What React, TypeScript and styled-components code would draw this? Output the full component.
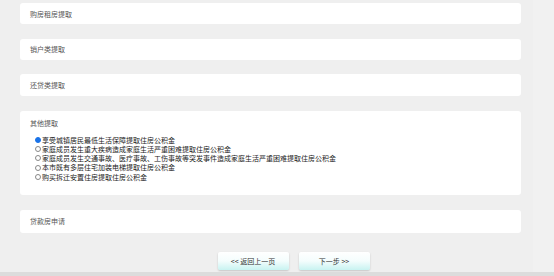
import styled, { createGlobalStyle } from "styled-components";

const GlobalStyle = createGlobalStyle`
  html, body {
    margin: 0;
    padding: 0;
    background: #efefef;
  }
  body {
    font-family: "Noto Sans CJK SC", "Liberation Sans", sans-serif;
    color: #333;
  }
`;

const Page = styled.div`
  width: 554px;
  height: 276px;
  display: flex;
  flex-direction: column;
  overflow: hidden;
  background: #efefef;
`;
const Main = styled.div`
  flex: 1;
  display: flex;
`;
const Content = styled.div`
  width: 501px;
  padding: 3px 0 0 20px;
  display: flex;
  flex-direction: column;
  gap: 14.5px;
`;
const SideStrip = styled.div`
  flex: 1;
  margin-left: 12px;
  background: #f1f1f1;
`;
const Card = styled.div<{ $tall?: boolean; $h?: number }>`
  background: #fff;
  border-radius: 3px;
  padding: ${(p) => (p.$tall ? "8px 10px 14px" : "0 10px")};
  height: ${(p) => (p.$tall ? "auto" : `${p.$h ?? 21}px`)};
  display: flex;
  flex-direction: column;
  justify-content: ${(p) => (p.$tall ? "flex-start" : "center")};
`;
const CardTitle = styled.div`
  font-size: 7px;
  line-height: 8px;
  color: #555;
`;
const Options = styled.div`
  margin-top: 9px;
  padding-left: 5px;
  display: flex;
  flex-direction: column;
  gap: 0.8px;
`;
const Option = styled.label`
  display: flex;
  align-items: center;
  font-size: 7px;
  line-height: 8.5px;
  color: #222;
`;
const Radio = styled.span<{ $checked?: boolean }>`
  width: 4px;
  height: 4px;
  border-radius: 50%;
  margin-right: 1px;
  border: 0.6px solid ${(p) => (p.$checked ? "#1a73e8" : "#888")};
  background: ${(p) => (p.$checked ? "#1a73e8" : "#fff")};
`;
const ButtonRow = styled.div`
  display: flex;
  justify-content: center;
  gap: 10px;
  margin-top: 5px;
  padding-left: 46px;
`;
const Button = styled.button`
  width: 71px;
  height: 18px;
  border: none;
  border-radius: 2px;
  background: linear-gradient(#ffffff 0%, #f4fdfd 50%, #c8f3f1 100%);
  box-shadow: 0 1px 2px rgba(0, 0, 0, 0.18);
  font-family: "Noto Sans CJK SC", "Liberation Sans", sans-serif;
  font-size: 7px;
  color: #333;
  padding: 0;
  cursor: pointer;
`;
const Footer = styled.div`
  height: 4px;
  background: #dcdcdc;
`;

const options = [
  "享受城镇居民最低生活保障提取住房公积金",
  "家庭成员发生重大疾病造成家庭生活严重困难提取住房公积金",
  "家庭成员发生交通事故、医疗事故、工伤事故等突发事件造成家庭生活严重困难提取住房公积金",
  "本市既有多层住宅加装电梯提取住房公积金",
  "购买拆迁安置住房提取住房公积金",
];

export default function App() {
  return (
    <Page>
      <GlobalStyle />
      <Main>
        <Content>
          <Card>
            <CardTitle>购房租房提取</CardTitle>
          </Card>
          <Card>
            <CardTitle>销户类提取</CardTitle>
          </Card>
          <Card $h={22}>
            <CardTitle>还贷类提取</CardTitle>
          </Card>
          <Card $tall>
            <CardTitle>其他提取</CardTitle>
            <Options>
              {options.map((o, i) => (
                <Option key={o}>
                  <Radio $checked={i === 0} />
                  {o}
                </Option>
              ))}
            </Options>
          </Card>
          <Card $h={23}>
            <CardTitle>贷款房申请</CardTitle>
          </Card>
          <ButtonRow>
            <Button>&lt;&lt; 返回上一页</Button>
            <Button>下一步 &gt;&gt;</Button>
          </ButtonRow>
        </Content>
        <SideStrip />
      </Main>
      <Footer />
    </Page>
  );
}
